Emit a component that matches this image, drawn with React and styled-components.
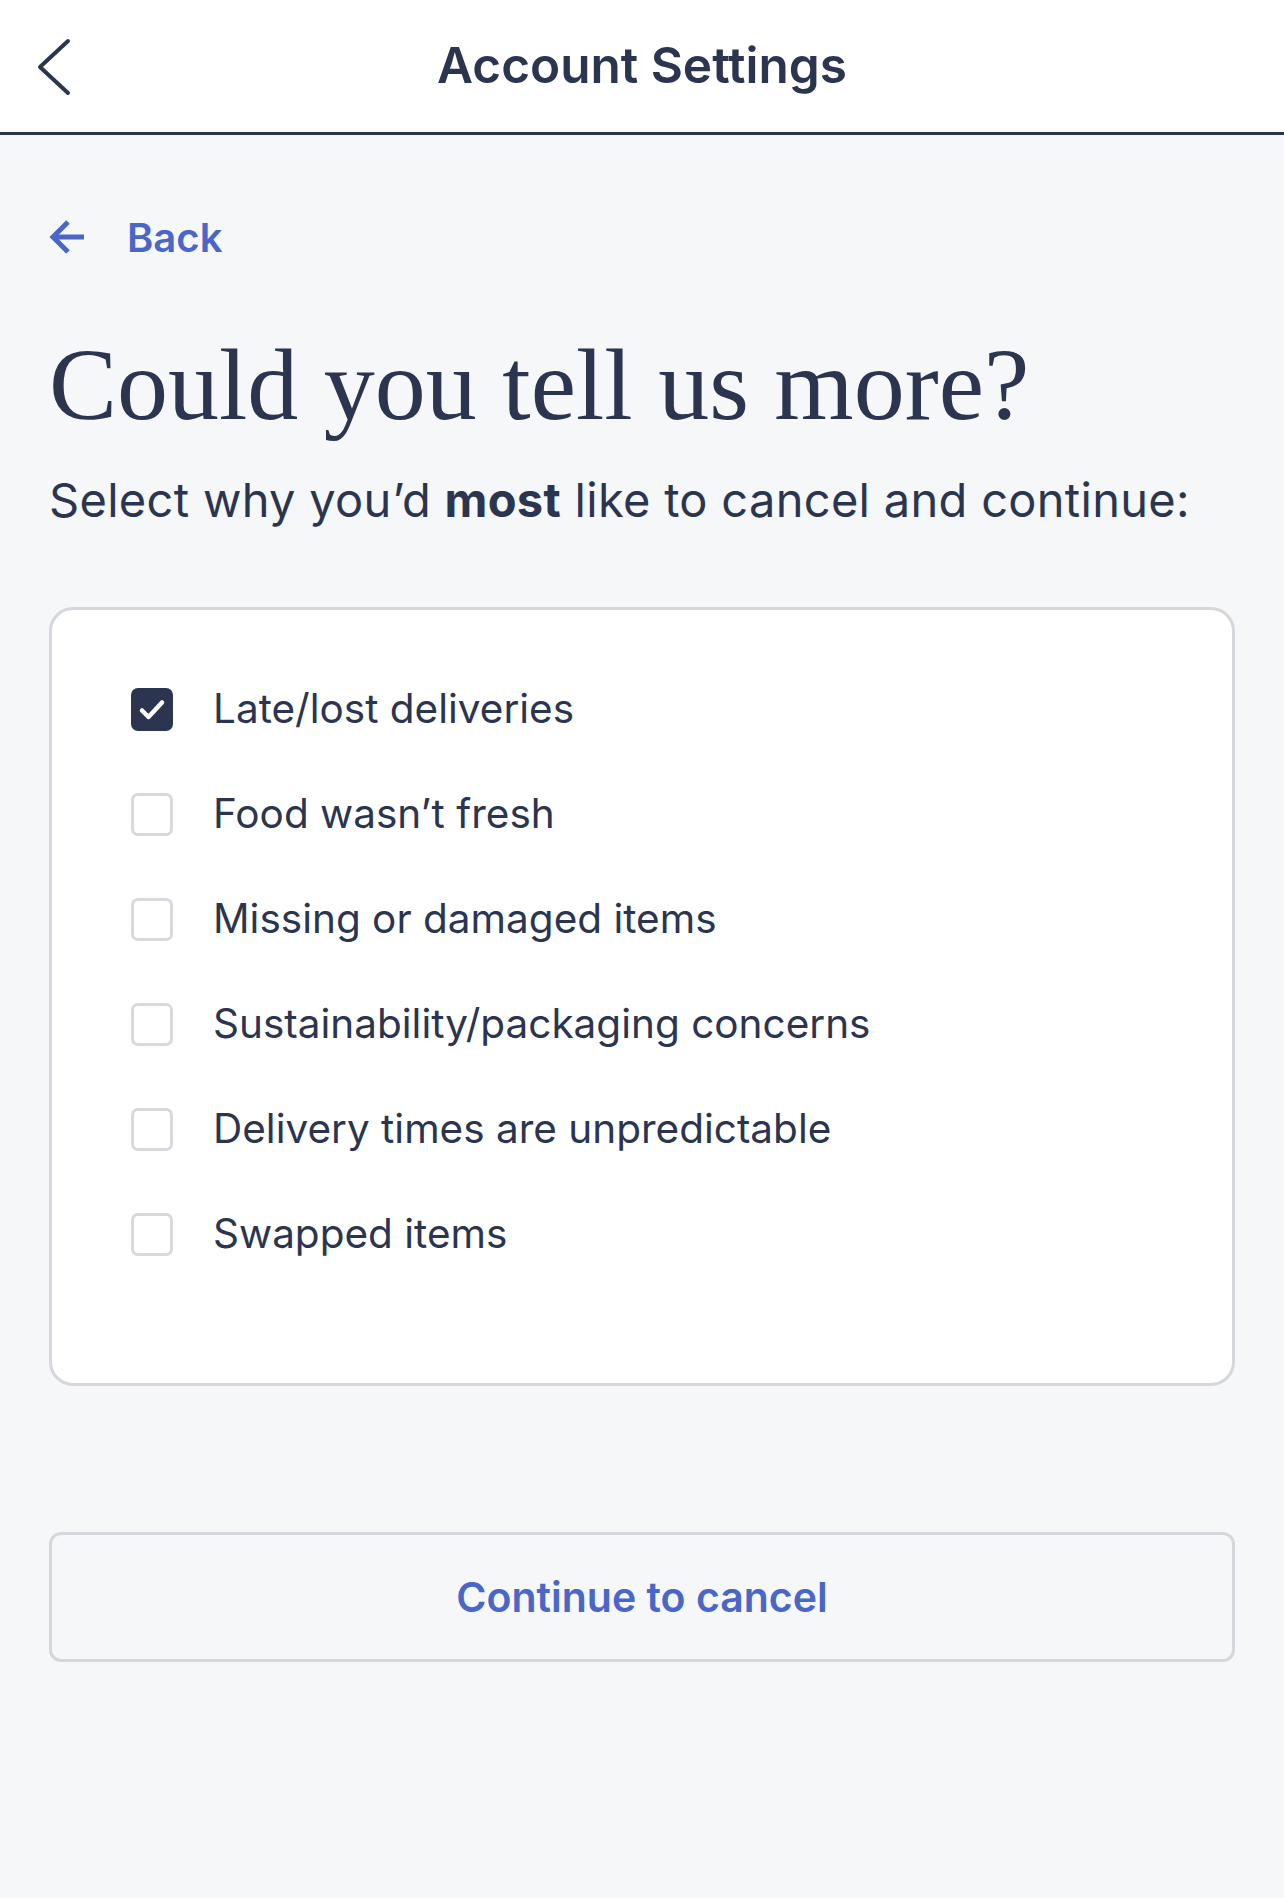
import React, { useState } from 'react'
import styled, { createGlobalStyle } from 'styled-components'

const reasons = [
  'Late/lost deliveries',
  'Food wasn’t fresh',
  'Missing or damaged items',
  'Sustainability/packaging concerns',
  'Delivery times are unpredictable',
  'Swapped items',
]

const App = () => {
  const [checked, setChecked] = useState([0])

  const toggle = (i) => {
    setChecked(checked.includes(i) ? checked.filter(c => c !== i) : [...checked, i])
  }

  return (
    <Page>
      <GlobalStyle />
      <Header>
        <HeaderBack aria-label="Back">
          <svg width="40" height="60" viewBox="0 0 40 60" fill="none">
            <polyline points="34,4 6,30 34,56" stroke="#2b3550" strokeWidth="4" strokeLinecap="round" strokeLinejoin="round" />
          </svg>
        </HeaderBack>
        <HeaderTitle>Account Settings</HeaderTitle>
        <span />
      </Header>
      <Main>
        <BackLink href="#">
          <svg width="38" height="36" viewBox="0 0 38 36" fill="none">
            <line x1="35" y1="18" x2="5" y2="18" stroke="#4a66c7" strokeWidth="5" />
            <polyline points="19,3 4,18 19,33" stroke="#4a66c7" strokeWidth="5" strokeLinejoin="miter" />
          </svg>
          <span>Back</span>
        </BackLink>
        <Heading>Could you tell us more?</Heading>
        <Subtitle>Select why you’d <b>most</b> like to cancel and continue:</Subtitle>
        <Card>
          {reasons.map((r, i) => (
            <Row key={r} onClick={() => toggle(i)}>
              <Box $on={checked.includes(i)}>
                {checked.includes(i) && (
                  <svg width="28" height="24" viewBox="0 0 28 24" fill="none">
                    <polyline points="4,12.5 10.5,19 24,4.5" stroke="#fff" strokeWidth="4.5" strokeLinecap="round" strokeLinejoin="round" />
                  </svg>
                )}
              </Box>
              <Label>{r}</Label>
            </Row>
          ))}
        </Card>
        <ContinueButton>Continue to cancel</ContinueButton>
      </Main>
    </Page>
  )
}

export default App

const GlobalStyle = createGlobalStyle`
  html, body {
    margin:0;
    padding:0;
    background:#f6f7f9;
  }
  *{
    box-sizing:border-box;
  }
`;
const Page = styled.div`
  min-height:1898px;
  background:#f6f7f9;
  font-family:Inter, "Noto Sans", sans-serif;
  color:#2b3550;
`;
const Header = styled.header`
  height:135px;
  background:#fff;
  border-bottom:3px solid #2b3550;
  display:grid;
  grid-template-columns:1fr auto 1fr;
  align-items:center;
  padding:0 34px;
`;
const HeaderBack = styled.button`
  border:none;
  background:none;
  padding:0;
  width:40px;
  height:60px;
  cursor:pointer;
  display:flex;
  margin-top:2px;
`;
const HeaderTitle = styled.h1`
  margin:0;
  font-size:49.5px;
  font-weight:600;
  letter-spacing:0;
  margin-top:-2px;
`;
const Main = styled.main`
  padding:77px 49px 0;
  display:flex;
  flex-direction:column;
`;
const BackLink = styled.a`
  display:flex;
  align-items:center;
  gap:40px;
  height:50px;
  color:#4a66c7;
  text-decoration:none;
  font-size:40px;
  font-weight:600;
  svg{
    flex-shrink:0;
  }
`;
const Heading = styled.h2`
  margin:67px 0 0;
  font-family:"Liberation Serif", "DejaVu Serif", serif;
  font-weight:400;
  font-size:102px;
  line-height:112px;
  letter-spacing:0;
`;
const Subtitle = styled.p`
  margin:29px 0 0;
  font-size:47px;
  line-height:60px;
  letter-spacing:0.3px;
  font-weight:400;
  b{
    font-weight:700;
  }
`;
const Card = styled.div`
  margin-top:77px;
  background:#fff;
  border:3px solid #d6d7dd;
  border-radius:24px;
  padding:47px 79px 96px;
  display:flex;
  flex-direction:column;
`;
const Row = styled.label`
  height:105px;
  display:flex;
  align-items:center;
  gap:40px;
  cursor:pointer;
`;
const Box = styled.span`
  width:42px;
  height:43px;
  border-radius:7px;
  flex-shrink:0;
  display:flex;
  align-items:center;
  justify-content:center;
  background:${p => p.$on ? '#2b3550' : '#fff'};
  border:${p => p.$on ? 'none' : '3px solid #d8d9df'};
`;
const Label = styled.span`
  font-size:40.5px;
  line-height:50px;
  margin-top:-1px;
`;
const ContinueButton = styled.button`
  margin-top:146px;
  height:130px;
  width:100%;
  background:transparent;
  border:3px solid #d6d7dd;
  border-radius:12px;
  font-family:Inter, "Noto Sans", sans-serif;
  font-size:41px;
  font-weight:600;
  color:#4a66c7;
  cursor:pointer;
`;
